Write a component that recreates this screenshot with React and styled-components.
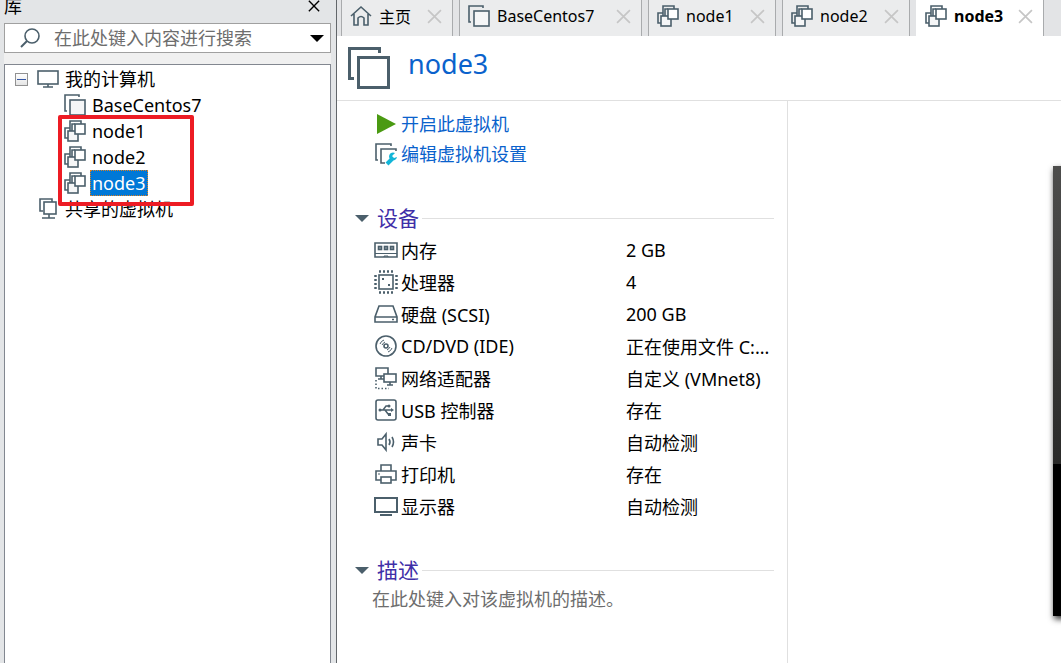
import styled, { createGlobalStyle } from "styled-components";
import { useState } from "react";

const LINE = "#4b5f6b";

const vms = ["BaseCentos7", "node1", "node2", "node3"];

const tabs = [
  { name: "主页", icon: HomeIcon, width: 112 },
  { name: "BaseCentos7", icon: VmIcon, width: 183 },
  { name: "node1", icon: CloneIcon, width: 128 },
  { name: "node2", icon: CloneIcon, width: 128 },
  { name: "node3", icon: CloneIcon, width: 128 },
];

const devices = [
  { name: "内存", value: "2 GB", icon: MemoryIcon },
  { name: "处理器", value: "4", icon: CpuIcon },
  { name: "硬盘 (SCSI)", value: "200 GB", icon: DiskIcon },
  { name: "CD/DVD (IDE)", value: "正在使用文件 C:...", icon: DiscIcon },
  { name: "网络适配器", value: "自定义 (VMnet8)", icon: NetworkIcon },
  { name: "USB 控制器", value: "存在", icon: UsbIcon },
  { name: "声卡", value: "自动检测", icon: SoundIcon },
  { name: "打印机", value: "存在", icon: PrinterIcon },
  { name: "显示器", value: "自动检测", icon: DisplayIcon },
];

export default function App() {
  const [selected, setSelected] = useState("node3");

  return (
    <>
      <GlobalStyle />
      <Window>
        <Library selected={selected} setSelected={setSelected} />
        <Main>
          <TabBar selected={selected} setSelected={setSelected} />
          <Header>
            <LargeVmIcon />
            <h1>{selected}</h1>
          </Header>
          <Content>
            <Details />
            <Preview>
              <Screen />
            </Preview>
          </Content>
        </Main>
      </Window>
    </>
  );
}

function Library(props) {
  const { selected, setSelected } = props;

  return (
    <Sidebar>
      <SidebarTitle>
        <h2>库</h2>
        <IconButton aria-label="关闭">
          <CloseIcon size={12} color="#000000" />
        </IconButton>
      </SidebarTitle>
      <SidebarBody>
        <Search>
          <SearchIcon />
          <input aria-label="搜索" placeholder="在此处键入内容进行搜索" />
          <IconButton aria-label="搜索选项">
            <ArrowDown width={14} height={7} color="#000000" />
          </IconButton>
        </Search>
        <Tree>
          <TreeRow $indent={10}>
            <Expander aria-label="折叠" />
            <TreeIcon>
              <ComputerIcon />
            </TreeIcon>
            <TreeLabel>我的计算机</TreeLabel>
          </TreeRow>
          {vms.map((vm, index) => (
            <TreeRow key={vm} $indent={59}>
              <TreeIcon>{index === 0 ? <VmIcon /> : <CloneIcon />}</TreeIcon>
              <TreeLabel
                $selected={vm === selected}
                onClick={() => setSelected(vm)}
              >
                {vm}
              </TreeLabel>
            </TreeRow>
          ))}
          <TreeRow $indent={32}>
            <TreeIcon>
              <SharedIcon />
            </TreeIcon>
            <TreeLabel>共享的虚拟机</TreeLabel>
          </TreeRow>
          <Marker />
        </Tree>
      </SidebarBody>
    </Sidebar>
  );
}

function TabBar(props) {
  const { selected, setSelected } = props;

  return (
    <Tabs>
      {tabs.map(({ name, icon: Icon, width }) => (
        <Tab key={name} $width={width} $active={name === selected}>
          <TabButton
            $active={name === selected}
            onClick={() => setSelected(name)}
          >
            <Icon />
            {name}
          </TabButton>
          <IconButton aria-label="关闭标签">
            <CloseIcon size={15} color="#c6c6c6" />
          </IconButton>
        </Tab>
      ))}
    </Tabs>
  );
}

function Details() {
  return (
    <DetailsColumn>
      <Actions>
        <a href="#start">
          <PlayIcon />
          <span>开启此虚拟机</span>
        </a>
        <a href="#settings">
          <SettingsIcon />
          <span>编辑虚拟机设置</span>
        </a>
      </Actions>
      <Section>
        <SectionTitle>
          <ArrowDown width={14} height={7} color={LINE} />
          <span>设备</span>
        </SectionTitle>
        <DeviceTable>
          <tbody>
            {devices.map(({ name, value, icon: Icon }) => (
              <tr key={name}>
                <th scope="row">
                  <DeviceName>
                    <Icon />
                    {name}
                  </DeviceName>
                </th>
                <td>{value}</td>
              </tr>
            ))}
          </tbody>
        </DeviceTable>
      </Section>
      <Section>
        <SectionTitle>
          <ArrowDown width={14} height={7} color={LINE} />
          <span>描述</span>
        </SectionTitle>
        <Description>在此处键入对该虚拟机的描述。</Description>
      </Section>
    </DetailsColumn>
  );
}

/* icons */

function CloseIcon({ size, color }) {
  return (
    <svg width={size} height={size} viewBox="0 0 14 14">
      <path d="M1 1L13 13M13 1L1 13" stroke={color} strokeWidth="1.6" />
    </svg>
  );
}

function ArrowDown({ width, height, color }) {
  return (
    <svg width={width} height={height} viewBox="0 0 14 7">
      <path d="M0 0H14L7 7Z" fill={color} />
    </svg>
  );
}

function SearchIcon() {
  return (
    <Drawing width="20" height="20" viewBox="0 0 20 20">
      <circle cx="12" cy="8" r="7" />
      <path d="M7 13L1 19" strokeWidth="2" />
    </Drawing>
  );
}

function ComputerIcon() {
  return (
    <Drawing width="22" height="18" viewBox="0 0 22 18">
      <rect x="1" y="1" width="20" height="13" />
      <path d="M11 14V17M6 17H16" />
    </Drawing>
  );
}

function SharedIcon() {
  return (
    <Drawing width="18" height="22" viewBox="0 0 18 22">
      <path d="M4 13H1V1H13V4" />
      <rect x="5" y="4" width="12" height="12" fill="#ffffff" />
      <path d="M10 16V20M3 20H16" />
    </Drawing>
  );
}

function VmIcon() {
  return (
    <Drawing width="22" height="22" viewBox="0 0 22 22">
      <path d="M3 17H1V1H15V3" />
      <rect x="6" y="6" width="15" height="15" fill="#f5f6f7" />
    </Drawing>
  );
}

function LargeVmIcon() {
  return (
    <Drawing width="42" height="42" viewBox="0 0 42 42" strokeWidth="3">
      <path d="M6 31.5H1.5V1.5H31.5V6" />
      <rect x="10.5" y="10.5" width="30" height="30" />
    </Drawing>
  );
}

function CloneIcon() {
  return (
    <Drawing width="22" height="22" viewBox="0 0 22 22">
      <path d="M4 18H1V8H6" />
      <path d="M6 11V1H17V4" />
      <rect x="4" y="11" width="10" height="10" fill="#f5f6f7" />
      <path d="M8 11V4H11" />
      <rect x="11" y="4" width="10" height="10" fill="#ffffff" />
    </Drawing>
  );
}

function HomeIcon() {
  return (
    <Drawing width="22" height="22" viewBox="0 0 22 22">
      <path d="M1 11L11 2L21 11M4 9V20H8V13Q11 10 14 13V20H18V9" />
    </Drawing>
  );
}

function PlayIcon() {
  return (
    <svg width="24" height="24" viewBox="0 0 24 24">
      <path d="M3 2L22 12L3 22Z" fill="#4a9a12" />
    </svg>
  );
}

function SettingsIcon() {
  return (
    <Drawing width="24" height="24" viewBox="0 0 24 24">
      <path d="M4 18H2V2H17V4M11 21H7V7H22V9" />
      <path
        d="M13 22L18 17"
        stroke="#12b5d8"
        strokeWidth="4"
      />
      <path
        d="M21 11A4 4 0 1 0 23 15L20 16L18 14L21 11Z"
        fill="#12b5d8"
        stroke="none"
      />
    </Drawing>
  );
}

function MemoryIcon() {
  return (
    <Drawing width="24" height="24" viewBox="0 0 24 24">
      <path d="M1 5H23V19H1Z" />
      <path d="M1 15.5H23M10 19V18H14V19" strokeWidth="1" />
      <rect x="4.5" y="8.5" width="3" height="3" fill="#9aa7af" />
      <rect x="10.5" y="8.5" width="3" height="3" fill="#9aa7af" />
      <rect x="16.5" y="8.5" width="3" height="3" fill="#9aa7af" />
    </Drawing>
  );
}

function CpuIcon() {
  return (
    <Drawing width="24" height="24" viewBox="0 0 24 24">
      <rect x="5" y="5" width="14" height="14" />
      <path d="M5 1.5H19M5 22.5H19" strokeWidth="2.5" strokeDasharray="2" />
      <path d="M1.5 5V19M22.5 5V19" strokeWidth="2.5" strokeDasharray="2" />
      <rect x="8" y="8" width="2" height="2" fill={LINE} stroke="none" />
      <rect x="14" y="14" width="2" height="2" fill={LINE} stroke="none" />
    </Drawing>
  );
}

function DiskIcon() {
  return (
    <Drawing width="24" height="24" viewBox="0 0 24 24">
      <path d="M5 4H19L23 15V20H1V15ZM1 15H23" />
      <path d="M18 17.5H20" />
    </Drawing>
  );
}

function DiscIcon() {
  return (
    <Drawing width="24" height="24" viewBox="0 0 24 24">
      <circle cx="12" cy="12" r="10" />
      <circle cx="12" cy="12" r="2" />
      <path d="M6 10Q7 7 10 6M8 11Q9 9 11 8M18 14Q17 17 14 18M16 13Q15 15 13 16" strokeWidth="1" />
    </Drawing>
  );
}

function NetworkIcon() {
  return (
    <Drawing width="24" height="24" viewBox="0 0 24 24">
      <path d="M10 10H2V2H14V8M7 10V13M4 13H10" />
      <rect x="10" y="8" width="12" height="8" fill="#ffffff" />
      <path d="M16 16V19M13 19H19" />
      <path d="M2 14V22.5H15" strokeDasharray="1.5 2" />
    </Drawing>
  );
}

function UsbIcon() {
  return (
    <Drawing width="24" height="24" viewBox="0 0 24 24">
      <rect x="2" y="2" width="20" height="20" rx="2" />
      <path d="M6 12H18M9 12L12 8H15M11 12L14 16H16" strokeWidth="1.5" />
      <path d="M17 10L20 12L17 14Z" fill={LINE} stroke="none" />
      <circle cx="6" cy="12" r="1.5" fill={LINE} stroke="none" />
      <circle cx="15" cy="8" r="1.5" fill={LINE} stroke="none" />
      <rect x="14" y="15" width="3" height="3" fill={LINE} stroke="none" />
    </Drawing>
  );
}

function SoundIcon() {
  return (
    <Drawing width="24" height="24" viewBox="0 0 24 24">
      <path d="M4 9H8L12 4V20L8 15H4Z" />
      <path d="M15 9Q17 12 15 15M18 7Q21 12 18 17" />
    </Drawing>
  );
}

function PrinterIcon() {
  return (
    <Drawing width="24" height="24" viewBox="0 0 24 24">
      <path d="M7 9V3H17V9M7 18H2V9H22V18H17" />
      <rect x="7" y="15" width="10" height="6" />
      <path d="M4 12H6" strokeWidth="1" />
    </Drawing>
  );
}

function DisplayIcon() {
  return (
    <Drawing width="24" height="24" viewBox="0 0 24 24" strokeWidth="2">
      <rect x="1" y="4" width="22" height="14" />
      <path d="M6 21H18" />
    </Drawing>
  );
}

const GlobalStyle = createGlobalStyle`
  * {
    box-sizing: border-box;
  }

  body {
    margin: 0;
    overflow: hidden;
    background: #ffffff;
    color: #000000;
    font-family: "Noto Sans", "Noto Sans CJK SC", sans-serif;
    font-size: 18px;
  }

  h1, h2, h3, p, ul {
    margin: 0;
    padding: 0;
    font-weight: 400;
  }

  button, input {
    padding: 0;
    border: none;
    background: none;
    font: inherit;
    color: inherit;
  }

  svg {
    display: block;
    flex: none;
  }
`;

const Drawing = styled.svg.attrs((props) => ({
  fill: "none",
  stroke: LINE,
  strokeWidth: props.strokeWidth || 1.6,
}))``;

const Window = styled.div`
  display: grid;
  grid-template-columns: 337px 1fr;
  height: 100vh;
`;

const Sidebar = styled.aside`
  display: flex;
  flex-direction: column;
  padding: 0 5px 0 4px;
  border-right: 1px solid #62666a;
  background: #e3e5e7;
`;

const SidebarTitle = styled.div`
  display: flex;
  justify-content: space-between;
  height: 23px;
  padding-right: 11px;

  h2 {
    font-size: 18px;
    line-height: 12px;
  }

  button {
    height: 12px;
  }
`;

const IconButton = styled.button`
  display: flex;
  align-items: center;
  justify-content: center;
`;

const SidebarBody = styled.div`
  display: flex;
  flex-direction: column;
  flex: 1;
  gap: 11px;
  background: #f0f0f0;
`;

const Search = styled.div`
  display: flex;
  align-items: center;
  height: 30px;
  padding: 0 6px 0 15px;
  border: 1px solid #a0a0a0;
  background: #ffffff;

  input {
    flex: 1;
    min-width: 0;
    margin-left: 14px;
    outline: none;
  }

  input::placeholder {
    color: #6d6d6d;
  }
`;

const Tree = styled.ul`
  position: relative;
  flex: 1;
  padding-top: 1px;
  border: 1px solid #828790;
  border-bottom: none;
  background: #ffffff;
  list-style: none;
`;

const TreeRow = styled.li`
  display: flex;
  align-items: center;
  height: 26px;
  padding-left: ${(props) => props.$indent}px;
`;

const TreeIcon = styled.span`
  display: flex;
  justify-content: center;
  width: 22px;
  margin-right: 4px;
`;

const TreeLabel = styled.button`
  height: 26px;
  padding: 0 2px;
  line-height: 24px;
  background: ${(props) => (props.$selected ? "#0078d7" : "none")};
  color: ${(props) => (props.$selected ? "#ffffff" : "#000000")};
  outline: ${(props) => (props.$selected ? "1px dotted #e08020" : "none")};
  outline-offset: -1px;
`;

const Expander = styled.button`
  display: flex;
  align-items: center;
  justify-content: center;
  width: 13px;
  height: 13px;
  margin-right: 9px;
  border: 1px solid #919191;
  background: linear-gradient(#ffffff, #e4e4e4);

  &::before {
    content: "";
    width: 9px;
    height: 1px;
    background: #3355a5;
  }
`;

/* frame drawn over the cloned machines */
const Marker = styled.div`
  position: absolute;
  top: 50px;
  left: 53px;
  width: 136px;
  height: 91px;
  border: 4px solid #ed1c24;
  border-radius: 2px;
  pointer-events: none;
`;

const Main = styled.main`
  display: flex;
  flex-direction: column;
  min-width: 0;
`;

const Tabs = styled.nav`
  display: flex;
  gap: 6px;
  height: 36px;
  padding-left: 4px;
  background: #e3e4e6;
`;

const Tab = styled.div`
  display: flex;
  justify-content: space-between;
  width: ${(props) => props.$width}px;
  height: 36px;
  padding: 0 10px 4px 8px;
  border: 1px solid #a9abad;
  border-width: 0 1px;
  border-left-color: ${(props) => (props.$active ? "#ffffff" : "#a9abad")};
  background: ${(props) => (props.$active ? "#ffffff" : "#ebeced")};
`;

const TabButton = styled.button`
  display: flex;
  align-items: center;
  gap: 7px;
  font-size: 16px;
  font-weight: ${(props) => (props.$active ? 700 : 400)};
`;

const Header = styled.header`
  display: flex;
  align-items: center;
  gap: 18px;
  height: 65px;
  padding-left: 11px;
  border-bottom: 1px solid #e0e0e0;

  h1 {
    padding-bottom: 8px;
    color: #0a62cc;
    font-size: 27px;
    line-height: 36px;
  }
`;

const Content = styled.div`
  display: grid;
  grid-template-columns: 451px 1fr;
  flex: 1;
  min-height: 0;
`;

const DetailsColumn = styled.div`
  padding: 8px 13px 0 17px;
  border-right: 1px solid #e0e0e0;
`;

const Actions = styled.div`
  padding-left: 20px;

  a {
    display: flex;
    align-items: center;
    gap: 3px;
    height: 30px;
    color: #0a62cc;
    text-decoration: none;
  }

  span {
    padding-bottom: 2px;
  }
`;

const Section = styled.section`
  padding-top: 34px;
`;

const SectionTitle = styled.h3`
  display: flex;
  align-items: center;
  height: 30px;
  color: #3f2fa8;
  font-size: 21px;

  svg {
    margin: 0 8px 0 1px;
  }

  span {
    padding-bottom: 2px;
  }

  &::after {
    content: "";
    flex: 1;
    height: 1px;
    margin-left: 3px;
    background: #e0e0e0;
  }
`;

const DeviceTable = styled.table`
  width: 100%;
  margin: 1px 0 -1px;
  table-layout: fixed;
  border-collapse: collapse;

  tr {
    height: 32px;
  }

  th, td {
    padding: 0;
    font-weight: 400;
    text-align: left;
    white-space: nowrap;
  }

  th {
    width: 272px;
  }
`;

const DeviceName = styled.span`
  display: flex;
  align-items: center;
  gap: 3px;
  padding-left: 20px;
`;

const Description = styled.p`
  padding-left: 18px;
  color: #6d6d6d;
  line-height: 28px;
`;

const Preview = styled.div`
  min-width: 0;
  padding: 65px 0 0 265px;
  overflow: hidden;
`;

const Screen = styled.div`
  width: 600px;
  height: 450px;
  background: linear-gradient(#4d4d4c, #2a2a29 298px, #000000 298px);
  box-shadow: 1px 3px 6px rgba(0, 0, 0, 0.8);
`;
